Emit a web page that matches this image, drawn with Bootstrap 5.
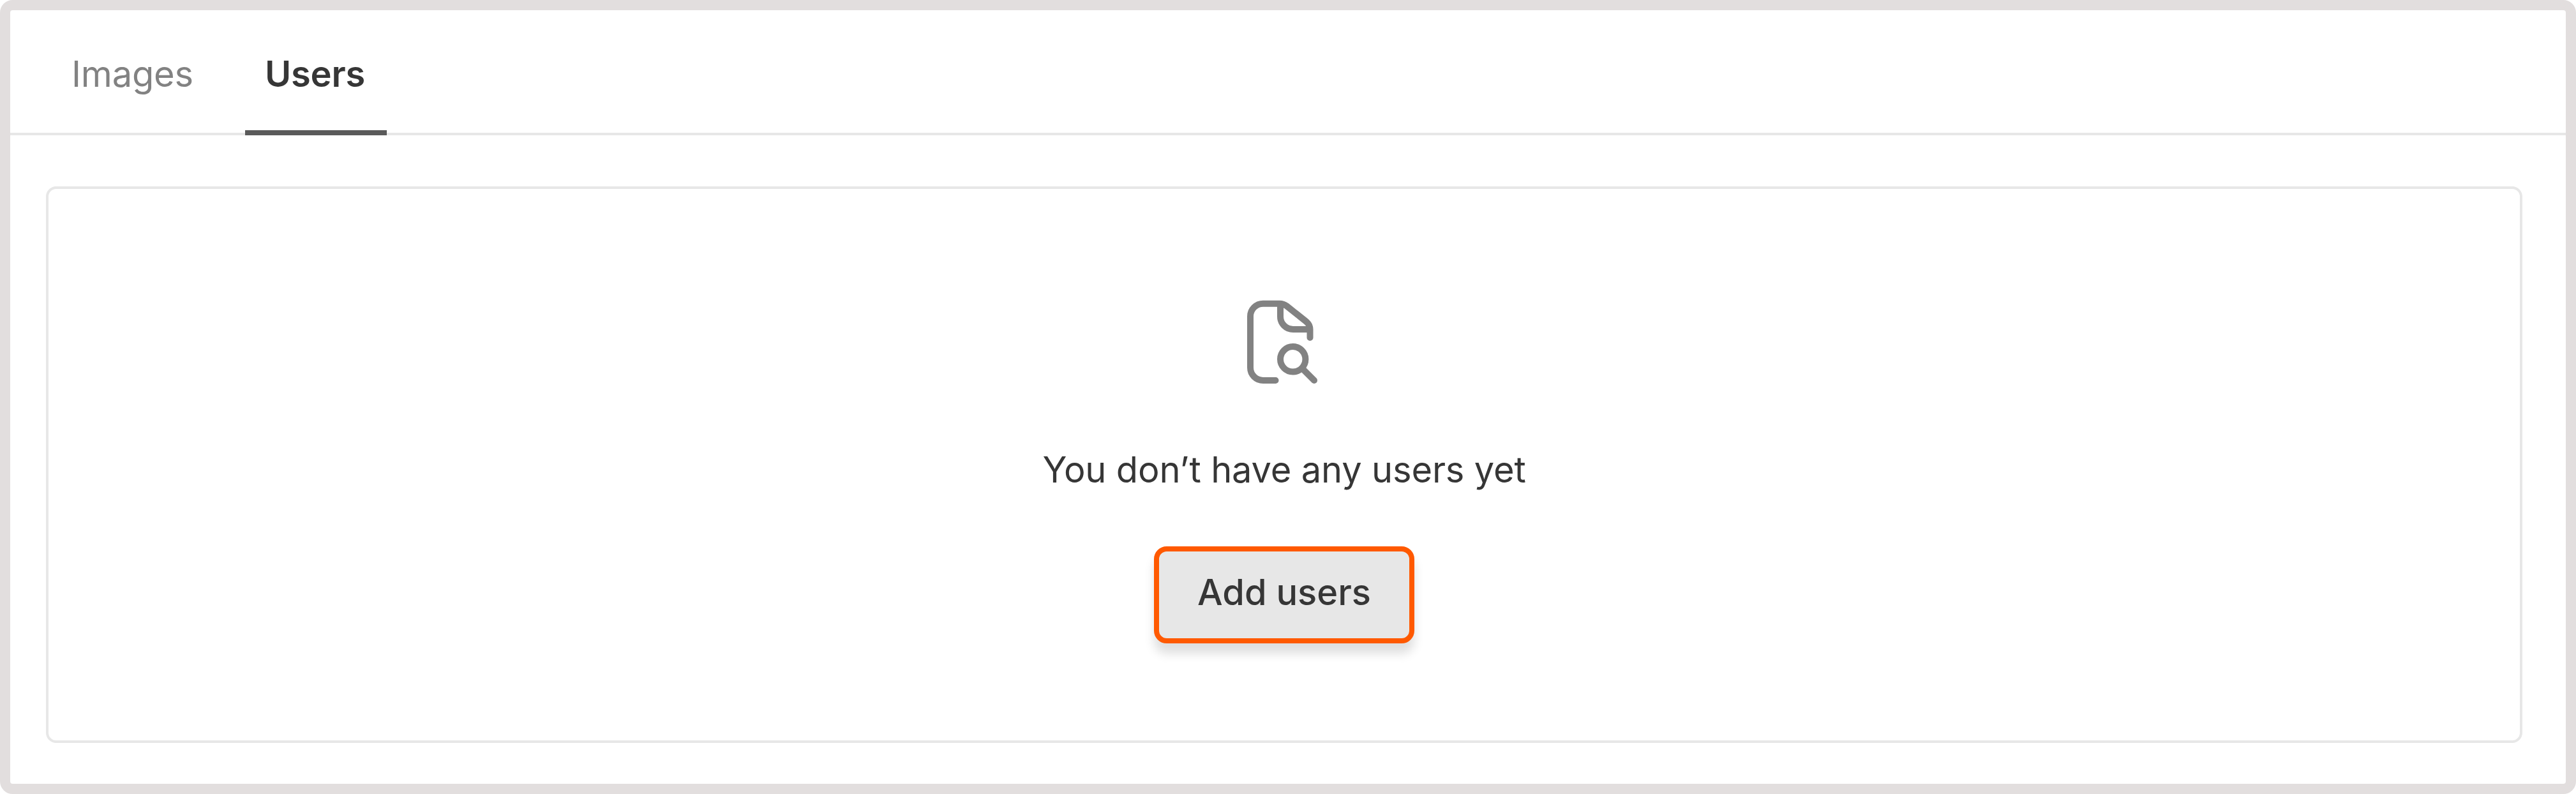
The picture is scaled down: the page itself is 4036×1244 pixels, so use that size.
<!DOCTYPE html>
<html lang="en">
<head>
<meta charset="utf-8">
<title>Users</title>
<link href="https://cdn.jsdelivr.net/npm/bootstrap@5.3.0/dist/css/bootstrap.min.css" rel="stylesheet">
<style>
body { font-family: Inter, "Liberation Sans", sans-serif; font-size: 56px; line-height: 80px; color: #363636; }
.frame { height: 1244px; border: 16px solid #e2dede; border-radius: 20px; }
.tabs { height: 196px; border-bottom: 4px solid #e7e7e7; padding-left: 64px; gap: 48px; }
.tabs .nav-link { height: 196px; padding: 60px 32px 0; line-height: 80px; font-size: 56px; letter-spacing: -.2px; color: #828282; border-bottom: 8px solid transparent; white-space: nowrap; }
.tabs .nav-link.active { padding-left: 31px; color: #363636; font-weight: 600; border-color: #5a5a5a; }
.tab-images { width: 256px; }
.tab-users { width: 222px; }
.empty-state { height: 872px; margin: 80px 68px 0 56px; border: 4px solid #e7e7e7; border-radius: 16px; padding-top: 160px; }
.empty-icon { width: 160px; height: 160px; margin-bottom: 80px; }
.empty-text { margin-bottom: 80px; letter-spacing: -.17px; white-space: nowrap; }
.btn-add { width: 408px; height: 152px; padding: 0 0 8px; font-size: 56px; font-weight: 500; line-height: 80px; color: #363636; background: #e7e7e7; border: 8px solid #ff5900; border-radius: 20px; box-shadow: 0 16px 16px rgba(0,0,0,.13); white-space: nowrap; }
</style>
<script src="https://cdn.jsdelivr.net/npm/bootstrap@5.3.0/dist/js/bootstrap.bundle.min.js"></script>
</head>
<body>
<main class="frame bg-white">
  <nav class="nav tabs flex-nowrap">
    <a class="nav-link tab-images" href="#">Images</a>
    <a class="nav-link tab-users active" href="#">Users</a>
  </nav>
  <section class="empty-state d-flex flex-column align-items-center">
    <svg class="empty-icon flex-shrink-0" viewBox="12 16 160 160" fill="none" stroke="#828282" stroke-width="10" stroke-linecap="round" stroke-linejoin="round">
      <path d="M78.500 156H59a20 20 0 0 1-20-20V55.700a20 20 0 0 1 20-20H84.500Q91 35.700 96 39.500L125.500 63Q132.500 68.500 132.500 76V89"/>
      <path d="M86 36V56a20 20 0 0 0 20 20H132"/>
      <circle cx="105.700" cy="122.800" r="19.700"/>
      <path d="M120.500 137.500L139 156"/>
    </svg>
    <p class="empty-text">You don’t have any users yet</p>
    <button type="button" class="btn btn-add">Add users</button>
  </section>
</main>
</body>
</html>
